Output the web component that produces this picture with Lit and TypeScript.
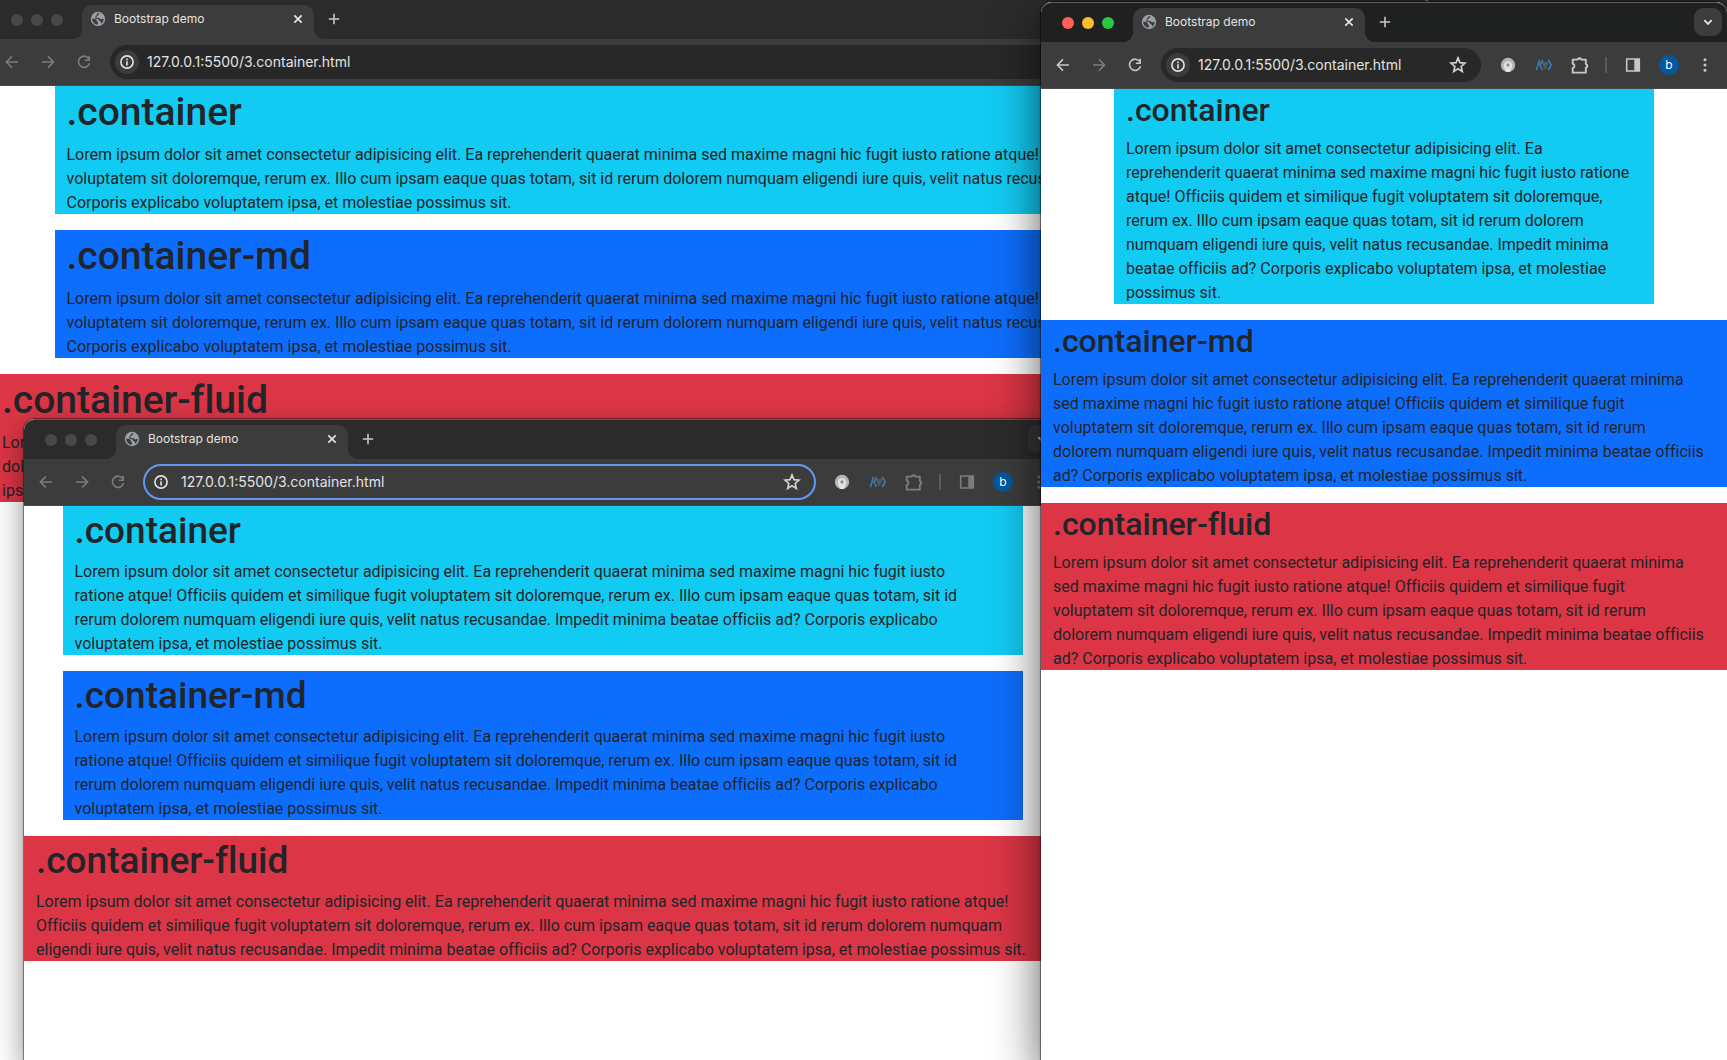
import { LitElement, html, css, svg, nothing } from "lit";
import { customElement, property } from "lit/decorators.js";
import { classMap } from "lit/directives/class-map.js";

type Layout = "xl" | "lg" | "sm";

interface Block {
  name: string;
  tone: string;
  fluid: boolean;
  lines: string[];
}

const WIDE = [
  "Lorem ipsum dolor sit amet consectetur adipisicing elit. Ea reprehenderit quaerat minima sed maxime magni hic fugit iusto ratione atque! Officiis quidem et similique fugit",
  "voluptatem sit doloremque, rerum ex. Illo cum ipsam eaque quas totam, sit id rerum dolorem numquam eligendi iure quis, velit natus recusandae. Impedit minima beatae officiis ad?",
  "Corporis explicabo voluptatem ipsa, et molestiae possimus sit.",
];
const WIDE_FLUID = [
  "Lorem ipsum dolor sit amet consectetur adipisicing elit. Ea reprehenderit quaerat minima sed maxime magni hic fugit iusto ratione atque! Officiis quidem et similique fugit voluptatem sit",
  "doloremque, rerum ex. Illo cum ipsam eaque quas totam, sit id rerum dolorem numquam eligendi iure quis, velit natus recusandae. Impedit minima beatae officiis ad? Corporis explicabo voluptatem",
  "ipsa, et molestiae possimus sit.",
];
const MEDIUM = [
  "Lorem ipsum dolor sit amet consectetur adipisicing elit. Ea reprehenderit quaerat minima sed maxime magni hic fugit iusto",
  "ratione atque! Officiis quidem et similique fugit voluptatem sit doloremque, rerum ex. Illo cum ipsam eaque quas totam, sit id",
  "rerum dolorem numquam eligendi iure quis, velit natus recusandae. Impedit minima beatae officiis ad? Corporis explicabo",
  "voluptatem ipsa, et molestiae possimus sit.",
];
const MEDIUM_FLUID = [
  "Lorem ipsum dolor sit amet consectetur adipisicing elit. Ea reprehenderit quaerat minima sed maxime magni hic fugit iusto ratione atque!",
  "Officiis quidem et similique fugit voluptatem sit doloremque, rerum ex. Illo cum ipsam eaque quas totam, sit id rerum dolorem numquam",
  "eligendi iure quis, velit natus recusandae. Impedit minima beatae officiis ad? Corporis explicabo voluptatem ipsa, et molestiae possimus sit.",
];
const SMALL = [
  "Lorem ipsum dolor sit amet consectetur adipisicing elit. Ea",
  "reprehenderit quaerat minima sed maxime magni hic fugit iusto ratione",
  "atque! Officiis quidem et similique fugit voluptatem sit doloremque,",
  "rerum ex. Illo cum ipsam eaque quas totam, sit id rerum dolorem",
  "numquam eligendi iure quis, velit natus recusandae. Impedit minima",
  "beatae officiis ad? Corporis explicabo voluptatem ipsa, et molestiae",
  "possimus sit.",
];
const SMALL_FLUID = [
  "Lorem ipsum dolor sit amet consectetur adipisicing elit. Ea reprehenderit quaerat minima",
  "sed maxime magni hic fugit iusto ratione atque! Officiis quidem et similique fugit",
  "voluptatem sit doloremque, rerum ex. Illo cum ipsam eaque quas totam, sit id rerum",
  "dolorem numquam eligendi iure quis, velit natus recusandae. Impedit minima beatae officiis",
  "ad? Corporis explicabo voluptatem ipsa, et molestiae possimus sit.",
];

function blocks(boxed: string[], fluid: string[], mdFluid: boolean): Block[] {
  return [
    { name: ".container", tone: "info", fluid: false, lines: boxed },
    { name: ".container-md", tone: "primary", fluid: mdFluid, lines: mdFluid ? fluid : boxed },
    { name: ".container-fluid", tone: "danger", fluid: true, lines: fluid },
  ];
}

const PAGES: Record<Layout, Block[]> = {
  xl: blocks(WIDE, WIDE_FLUID, false),
  lg: blocks(MEDIUM, MEDIUM_FLUID, false),
  sm: blocks(SMALL, SMALL_FLUID, true),
};

@customElement("demo-page")
class DemoPage extends LitElement {
  @property() layout: Layout = "xl";

  static styles = css`
    :host {
      display: block;
      color: #212529;
      font-family: Roboto, "Liberation Sans", sans-serif;
      font-variant-ligatures: none;
    }
    .page {
      display: flex;
      flex-direction: column;
      gap: 16px;
    }
    .block {
      box-sizing: border-box;
      width: 100%;
      padding: 2px 12px 0;
      margin: 0 auto;
    }
    .xl .boxed { max-width: 1140px; }
    .lg .boxed { max-width: 960px; }
    .sm .boxed { max-width: 540px; }
    .info { background: #12cbf2; }
    .primary { background: #0d6efd; }
    .danger { background: #dc3545; }
    h1 {
      margin: 0 0 7px;
      font-weight: 500;
      white-space: nowrap;
    }
    .xl h1 { font-size: 39px; line-height: 48px; }
    .lg h1 { font-size: 37px; line-height: 45px; }
    .sm h1 { font-size: 32px; line-height: 39px; }
    p {
      margin: 0 0 -1px;
      font-size: 16px;
      line-height: 24px;
      white-space: nowrap;
    }
  `;

  render() {
    return html`
      <main class="page ${this.layout}">
        ${PAGES[this.layout].map(
          (b) => html`
            <section class="block ${b.tone} ${b.fluid ? "" : "boxed"}">
              <h1>${b.name}</h1>
              <p>${b.lines.map((l, i) => html`${i ? html`<br />` : nothing}${l}`)}</p>
            </section>
          `,
        )}
      </main>
    `;
  }
}

const icon = {
  globe: svg`<circle cx="8" cy="8" r="7.2" fill="#9aa0a6"/><path d="M2.2 7.4c1.7.2 3 .3 3.900 1.100.9.8.3 1.700 1.300 2.200.9.400.5 1.500.6 2.800-3.400.1-5.900-2.600-5.800-6.100zM9.600 2.400c-.2 1.200-1.500 1-1.800 2-.2.900-1.700.700-1.500 1.800.2 1 1.700.600 2.700.700 1.100.1 1.100 1.500 2.300 1.500.8 0 .8-.9 2.300-.7.100 2.100-.9 4-2.500 5 .1-1.300-.1-2.400-1.200-2.500-1.300-.2-.5-1.700-1.600-2-1.400-.4-3.100 0-3.100-1.500 0-1.400 1.200-1.700 1.300-2.700.1-.7.7-1.300 1.500-1.700z" fill="#3c3c3c"/>`,
  close: svg`<path d="M4.300 4.300l7.400 7.400M11.700 4.300l-7.400 7.400" fill="none" stroke="currentColor" stroke-width="1.700"/>`,
  plus: svg`<path d="M8 2.800v10.400M2.800 8h10.400" fill="none" stroke="currentColor" stroke-width="1.600"/>`,
  chevron: svg`<path d="M4.300 6.200L8 9.900l3.700-3.700" fill="none" stroke="currentColor" stroke-width="1.900"/>`,
  back: svg`<path d="M14 8H2.600M8 2.400L2.400 8 8 13.600" fill="none" stroke="currentColor" stroke-width="1.600"/>`,
  forward: svg`<path d="M2 8h11.400M8 2.400L13.600 8 8 13.600" fill="none" stroke="currentColor" stroke-width="1.600"/>`,
  reload: svg`<path d="M12.700 4.600A5.600 5.600 0 1 0 13.500 9.200" fill="none" stroke="currentColor" stroke-width="1.600"/><path d="M13.200 1.800v4.400H8.800" fill="none" stroke="currentColor" stroke-width="1.600"/>`,
  info: svg`<circle cx="8" cy="8" r="6.100" fill="none" stroke="currentColor" stroke-width="1.600"/><path d="M7.200 7.200h1.600v4.200H7.200zM7.200 4.600h1.600v1.600H7.200z" fill="currentColor"/>`,
  star: svg`<path d="M8 1.700l1.700 4.200 4.500.4-3.400 3 1 4.400L8 11.400l-3.800 2.300 1-4.400-3.400-3 4.500-.4z" fill="none" stroke="currentColor" stroke-width="1.500"/>`,
  badge: svg`<circle cx="8" cy="8" r="7.200" fill="#b5b5b5"/><path d="M8 4.200a4.300 4.300 0 0 1 4.300 4.300c0 2.300-1.700 3.600-2.100 6.200a7 7 0 0 1-4.400 0c-.4-2.600-2.100-3.900-2.100-6.200A4.300 4.300 0 0 1 8 4.200z" fill="#e4e4e4"/><path d="M6 7l2-1.600L10 7v2L8 10.600 6 9z" fill="#bdbdbd"/><circle cx="8" cy="8" r=".9" fill="#777"/>`,
  code: svg`<path d="M3.400 2.800L.4 13.200M6.700 3L3.800 8l2.700 5M12.300 3l3 5-3 5" fill="none" stroke="#3a7fc4" stroke-width="1.500"/><path d="M6.200 4.200l1.800.9h2l1.800-.9.300 3.200-1.600 2v2.400H7.600V9.400L6 7.400z" fill="#56595c"/>`,
  puzzle: svg`<path d="M1.500 3.200h4.400a1.700 1.700 0 0 1 3.300 0h4v4a1.700 1.700 0 0 1 0 3.300v4.300H1.500v-4a2 2 0 0 0 0-3.900z" fill="none" stroke="currentColor" stroke-width="1.700" stroke-linejoin="round"/><path d="M5.900 3.100a1.700 1.700 0 0 1 3.400 0zM13.400 7.200a1.700 1.700 0 0 1 0 3.400z" fill="currentColor"/>`,
  panel: svg`<path d="M1.700 2h12.600v12H1.700z" fill="none" stroke="currentColor" stroke-width="1.600"/><path d="M9.300 2H15v12H9.300z" fill="currentColor"/>`,
  dots: svg`<circle cx="8" cy="2.700" r="1.500" fill="currentColor"/><circle cx="8" cy="8" r="1.500" fill="currentColor"/><circle cx="8" cy="13.300" r="1.500" fill="currentColor"/>`,
};

type IconName = keyof typeof icon;

function glyph(name: IconName) {
  return html`<svg viewBox="0 0 16 16" aria-hidden="true">${icon[name]}</svg>`;
}

@customElement("browser-window")
class BrowserWindow extends LitElement {
  @property({ type: Boolean }) active = false;
  @property({ type: Boolean }) editing = false;
  @property() layout: Layout = "xl";

  static styles = css`
    :host {
      display: block;
      font-family: Inter, "Liberation Sans", sans-serif;
    }
    .window {
      box-sizing: border-box;
      height: 100%;
      overflow: hidden;
      display: flex;
      flex-direction: column;
      background: #fff;
      border-radius: 11px 11px 0 0;
      box-shadow: 0 0 1px 1px rgba(0, 0, 0, 0.45), 0 12px 30px rgba(0, 0, 0, 0.45);
      color: #7c7c7c;
    }
    .window.active {
      box-shadow: 0 0 1px 1px rgba(0, 0, 0, 0.5), 0 18px 48px rgba(0, 0, 0, 0.65);
      color: #c7c7c7;
    }
    svg {
      display: block;
      width: 16px;
      height: 16px;
    }
    button {
      display: grid;
      place-items: center;
      flex: none;
      width: 36px;
      height: 28px;
      margin: 0;
      padding: 0;
      border: 0;
      background: none;
      color: inherit;
      font: inherit;
    }
    .strip {
      box-sizing: border-box;
      flex: none;
      display: flex;
      height: 40px;
      padding: 5px 5px 0 21px;
      background: #2b2b2b;
      border-top: 1px solid #5c5c5c;
      border-radius: 11px 11px 0 0;
    }
    .active .strip {
      background: #1f2120;
    }
    .lights {
      display: flex;
      gap: 8px;
      width: 71px;
      padding-top: 9px;
    }
    .light {
      width: 12px;
      height: 12px;
      border-radius: 50%;
      background: #484848;
    }
    .active .red { background: #ff5f57; }
    .active .amber { background: #febc2e; }
    .active .green { background: #28c840; }
    .tab {
      position: relative;
      box-sizing: border-box;
      display: flex;
      align-items: center;
      width: 232px;
      height: 34px;
      padding: 0 0 6px 8px;
      border-radius: 10px 10px 0 0;
      background: #3c3c3c;
      color: #e3e3e3;
      font-size: 12px;
      line-height: 16px;
    }
    .tab::before,
    .tab::after {
      content: "";
      position: absolute;
      bottom: 0;
      width: 10px;
      height: 10px;
    }
    .tab::before {
      right: 100%;
      background: radial-gradient(circle at 0 0, transparent 10px, #3c3c3c 10px);
    }
    .tab::after {
      left: 100%;
      background: radial-gradient(circle at 100% 0, transparent 10px, #3c3c3c 10px);
    }
    .title {
      flex: 1;
      padding-left: 8px;
    }
    .tab button {
      width: 32px;
    }
    .new {
      margin-left: 2px;
      color: #c7c7c7;
    }
    .search {
      width: 28px;
      margin-left: auto;
      border-radius: 9px;
      background: #363636;
      color: #c7c7c7;
    }
    .active .search {
      background: #3c3c3c;
      color: #e3e3e3;
    }
    .toolbar {
      box-sizing: border-box;
      flex: none;
      display: flex;
      align-items: center;
      height: 47px;
      padding: 0 4px;
      background: #3c3c3c;
      border-bottom: 1px solid #484848;
    }
    .active .forward {
      color: #7c7c7c;
    }
    .omnibox {
      flex: 1;
      min-width: 0;
      display: flex;
      align-items: center;
      height: 34px;
      margin: 0 9px 0 8px;
      border-radius: 17px;
      background: #282828;
      color: #e3e3e3;
    }
    .editing .omnibox {
      background: #3c3c3c;
      outline: 2px solid #6398f5;
      outline-offset: -1px;
    }
    .site {
      width: 24px;
      height: 24px;
      margin-left: 5px;
      border-radius: 50%;
      background: #3c3c3c;
    }
    input {
      flex: 1;
      min-width: 0;
      height: 24px;
      margin: 0;
      padding: 0 0 0 8px;
      border: 0;
      outline: 0;
      background: none;
      color: #e3e3e3;
      font: 14px/24px Inter, "Liberation Sans", sans-serif;
    }
    .star {
      width: 46px;
      color: #d0d0d0;
    }
    .star svg,
    .puzzle svg {
      width: 18px;
      height: 18px;
    }
    .divider {
      width: 2px;
      height: 16px;
      margin: 0 8px 0 7px;
      background: #5a5a5a;
    }
    .avatar {
      display: grid;
      place-items: center;
      width: 20px;
      height: 20px;
      border-radius: 50%;
      background: #0457a0;
      color: #fff;
      font-size: 12px;
      line-height: 20px;
    }
    .view {
      flex: 1;
      min-height: 0;
      border-left: 1px solid #c4c4c4;
      margin-left: -1px;
    }
    .docked {
      padding-right: 174px;
    }
  `;

  private tool(name: IconName, label: string, cls = "") {
    return html`<button type="button" class=${cls} aria-label=${label}>${glyph(name)}</button>`;
  }

  render() {
    const state = { window: true, active: this.active, editing: this.editing };
    return html`
      <div class=${classMap(state)}>
        <div class="strip">
          <div class="lights">
            <span class="light red"></span>
            <span class="light amber"></span>
            <span class="light green"></span>
          </div>
          <div class="tab">
            ${glyph("globe")}
            <span class="title">Bootstrap demo</span>
            ${this.tool("close", "Close tab")}
          </div>
          ${this.tool("plus", "New tab", "new")}
          ${this.tool("chevron", "Search tabs", "search")}
        </div>
        <div class="toolbar">
          ${this.tool("back", "Back")}
          ${this.tool("forward", "Forward", "forward")}
          ${this.tool("reload", "Reload")}
          <div class="omnibox">
            ${this.tool("info", "View site information", "site")}
            <input type="text" aria-label="Address" .value=${"127.0.0.1:5500/3.container.html"} />
            ${this.tool("star", "Bookmark this tab", "star")}
          </div>
          ${this.tool("badge", "Profile extension")}
          ${this.tool("code", "Code extension")}
          ${this.tool("puzzle", "Extensions", "puzzle")}
          <span class="divider"></span>
          ${this.tool("panel", "Side panel")}
          <button type="button" aria-label="Profile"><span class="avatar">b</span></button>
          ${this.tool("dots", "Menu")}
        </div>
        <div class=${classMap({ view: true, docked: this.layout === "xl" })}>
          <demo-page layout=${this.layout}></demo-page>
        </div>
      </div>
    `;
  }
}

@customElement("app-root")
class AppRoot extends LitElement {
  static styles = css`
    :host {
      display: block;
    }
    .desktop {
      position: relative;
      height: 100vh;
      overflow: hidden;
      background: #2b2b2b;
    }
    browser-window {
      position: absolute;
      bottom: 0;
    }
    .rear {
      top: -1px;
      left: -10px;
      right: 294px;
    }
    .middle {
      top: 419px;
      left: 24px;
      right: 666px;
    }
    .front {
      top: 2px;
      left: 1041px;
      right: 0;
    }
  `;

  render() {
    return html`
      <div class="desktop">
        <browser-window class="rear" layout="xl"></browser-window>
        <browser-window class="middle" layout="lg" editing></browser-window>
        <browser-window class="front" layout="sm" active></browser-window>
      </div>
    `;
  }
}
